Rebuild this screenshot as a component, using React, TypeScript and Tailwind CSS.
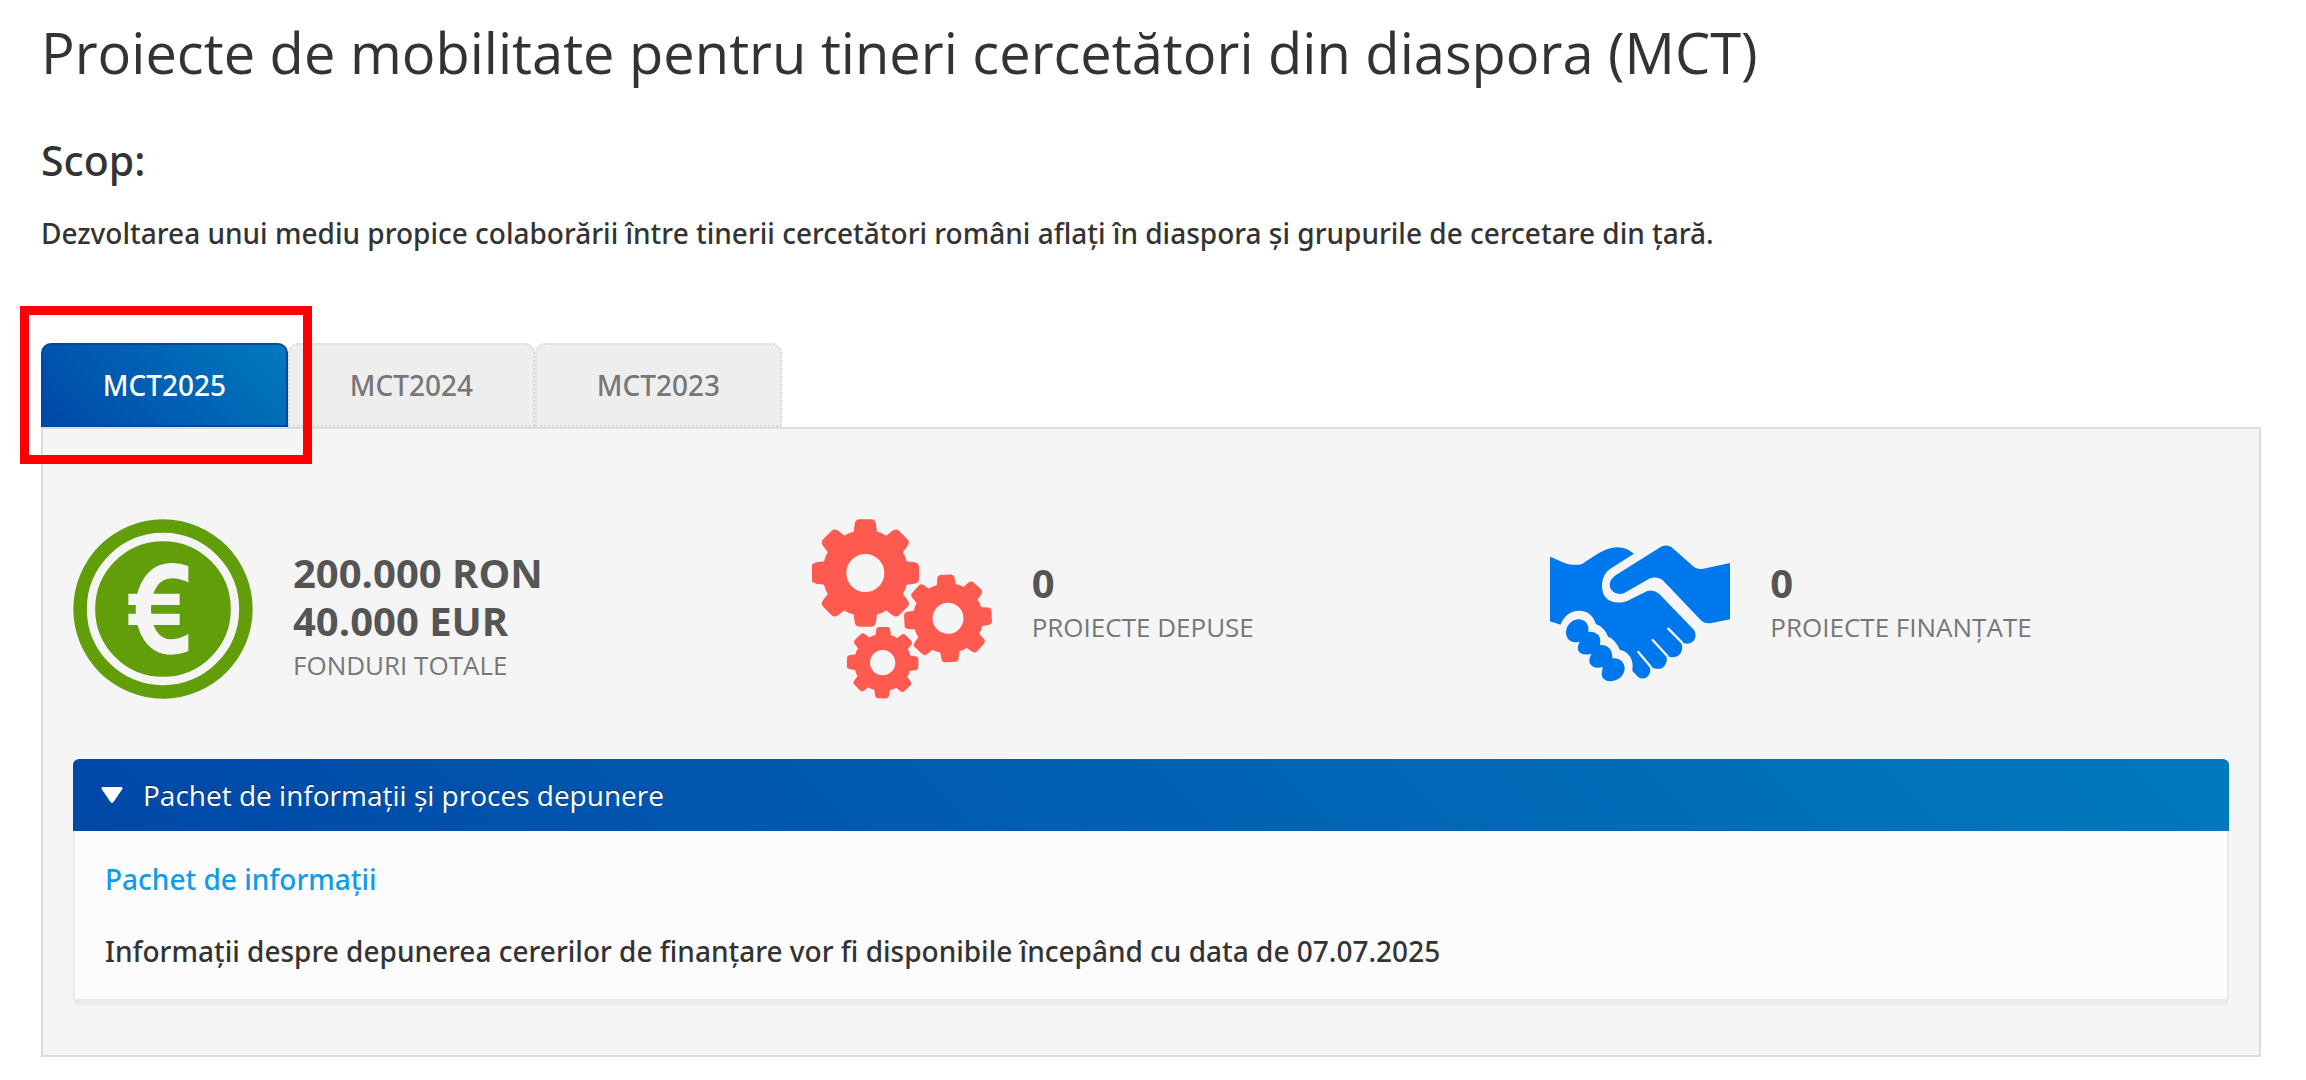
import { useState } from 'react';
import type { ReactNode } from 'react';

const tabs = ['MCT2025', 'MCT2024', 'MCT2023'];

const EuroIcon = () => (
    <svg viewBox="38 57 540 540" className="size-[180px] shrink-0" aria-hidden="true">
        <clipPath id="euro-arc">
            <rect x="200" y="180" width="184" height="300" />
        </clipPath>
        <circle cx="308" cy="327" r="269" fill="#629e0a" />
        <g fill="none" stroke="#f5f5f5">
            <circle cx="308" cy="327" r="216" strokeWidth="25" />
            <path
                clipPath="url(#euro-arc)"
                strokeWidth="46"
                d="M400 230 C376 217 358 212 336 212 C280 212 249 262 249 327 C249 392 280 441 332 441 C352 441 372 436 400 420"
            />
            <path strokeWidth="34" d="M204 298 H358 M204 358 H358" />
        </g>
    </svg>
);

const teeth = [0, 45, 90, 135, 180, 225, 270, 315];

const Gear = ({ transform }: { transform: string }) => (
    <g transform={transform}>
        <circle r="93" fill="none" stroke="#ff5a50" strokeWidth="72" />
        {teeth.map((angle) => (
            <path
                key={angle}
                transform={`rotate(${angle})`}
                d="M-36 -115 L-32 -147 Q-30 -161 -18 -161 L18 -161 Q30 -161 32 -147 L36 -115 Z"
                fill="#ff5a50"
            />
        ))}
    </g>
);

const GearsIcon = () => (
    <svg viewBox="36 42 540 540" className="size-[180px] shrink-0" aria-hidden="true">
        <Gear transform="translate(196 204)" />
        <Gear transform="translate(444 340) rotate(-3) scale(0.815)" />
        <Gear transform="translate(248 473) rotate(1) scale(0.665)" />
    </svg>
);

const HandshakeIcon = () => (
    <svg viewBox="60 -18 540 540" className="size-[180px] shrink-0" aria-hidden="true">
        <g fill="#0078ed">
            <path d="M60 95 C85 104 105 117 125 119 Q145 121 158 116 C175 104 205 82 235 71 C262 62 290 66 312 86 L240 132 C213 150 211 190 223 212 C238 235 268 236 290 229 L352 198 Q370 193 388 207 L490 313 C500 325 499 343 486 352 C474 359 463 356 453 350 C460 368 456 383 446 391 C434 400 420 398 409 390 C413 405 409 420 398 428 C386 435 370 431 358 422 C364 437 360 450 348 458 C334 464 324 458 316 447 L307 438 L308 420 C306 395 290 378 270 375 C262 355 248 340 234 335 C228 318 215 303 198 298 C190 270 170 257 148 257 C120 257 100 275 92 299 L60 289 Z" />
            <path d="M600 114 L520 131 Q505 135 493 127 L425 67 Q410 57 392 66 L258 150 C238 163 236 180 243 193 C252 207 268 210 283 204 L360 160 Q378 153 397 164 L512 285 Q525 297 545 294 L600 283 Z" />
            <path d="M108 325 C108 300 125 283 148 283 C168 285 178 300 175 321 C195 318 210 330 211 345 L210 360 C232 358 248 372 247 400 C268 397 285 412 284 432 C282 455 262 468 240 469 C217 468 210 452 219 427 C200 430 184 427 179 413 C176 404 180 395 184 386 C165 392 150 388 144 375 C142 365 146 358 149 350 C125 357 110 345 108 325 Z" />
        </g>
        <path
            d="M415 311 L456 353 M368 345 L412 393 M325 381 L362 425"
            stroke="#f5f5f5"
            strokeWidth="7"
            strokeLinecap="round"
        />
    </svg>
);

type StatProps = { icon: ReactNode; values: string[]; label: string };

const Stat = ({ icon, values, label }: StatProps) => (
    <div className="flex gap-10 px-[30px]">
        {icon}
        <div className={values.length > 1 ? 'pt-[30px]' : 'pt-10'}>
            {values.map((value) => (
                <p key={value} className="text-[40px] leading-[48px] font-bold text-[#555]">
                    {value}
                </p>
            ))}
            <p className="text-[26px] leading-[40px] text-[#777]">{label}</p>
        </div>
    </div>
);

const App = () => {
    const [activeTab, setActiveTab] = useState(tabs[0]);
    const [open, setOpen] = useState(true);

    return (
        <main className="bg-white pt-3 pr-[45px] pb-[23px] pl-[41px] font-['Open_Sans',sans-serif] text-[#333]">
            <h1 className="text-[56px] leading-[80px]">
                Proiecte de mobilitate pentru tineri cercetători din diaspora (MCT)
            </h1>
            <h2 className="mt-10 font-['Noto_Sans',sans-serif] text-[41px] leading-[56px] font-medium">Scop:</h2>
            <p className="mt-6 font-['Noto_Sans',sans-serif] text-[28px] leading-[42px] font-medium">
                Dezvoltarea unui mediu propice colaborării între tinerii cercetători români aflați în diaspora și
                grupurile de cercetare din țară.
            </p>

            <div className="mt-[89px] flex font-['Noto_Sans',sans-serif]" role="tablist">
                {tabs.map((tab) => (
                    <div key={tab} className="relative">
                        <button
                            role="tab"
                            aria-selected={tab === activeTab}
                            onClick={() => setActiveTab(tab)}
                            className={
                                tab === activeTab
                                    ? 'h-[84px] w-[247px] rounded-t-[10px] border-2 border-[#0046a5] bg-linear-45 from-[#0047a8] to-[#007abe] text-[28px] font-medium text-white'
                                    : 'h-[84px] w-[247px] rounded-t-[10px] border-2 border-dotted border-[#dadada] bg-[#eee] text-[28px] font-medium text-[#777]'
                            }
                        >
                            {tab}
                        </button>
                        {/* highlight around the newest call */}
                        {tab === tabs[0] && (
                            <span className="pointer-events-none absolute -top-[37px] -right-6 -bottom-[37px] -left-[21px] z-10 border-[9px] border-[#ff0000]" />
                        )}
                    </div>
                ))}
            </div>

            <section className="border-2 border-[#dcdcdc] bg-[#f5f5f5] pt-[90px] pb-[50px]">
                <div className="grid grid-cols-3">
                    <Stat icon={<EuroIcon />} values={['200.000 RON', '40.000 EUR']} label="FONDURI TOTALE" />
                    <Stat icon={<GearsIcon />} values={['0']} label="PROIECTE DEPUSE" />
                    <Stat icon={<HandshakeIcon />} values={['0']} label="PROIECTE FINANȚATE" />
                </div>

                <div className="mx-[30px] mt-[60px]">
                    <button
                        aria-expanded={open}
                        onClick={() => setOpen(!open)}
                        className="flex h-[72px] w-full items-center gap-5 rounded-t-md bg-linear-45 from-[#0047a8] to-[#007abe] pl-7 text-left text-[28px] text-white [text-shadow:0_-1px_1px_rgba(0,0,0,0.35)]"
                    >
                        <svg viewBox="0 0 22 16" className="h-4 w-[22px]" fill="#fff" aria-hidden="true">
                            <path d="M2 0 H20 Q22.500 0 21 2.500 L12.500 15 Q11 17 9.500 15 L1 2.500 Q-0.500 0 2 0 Z" />
                        </svg>
                        Pachet de informații și proces depunere
                    </button>
                    {open && (
                        <div className="rounded-b-md border-x-2 border-b-[6px] border-[#eaeaea] bg-[#fcfcfc] px-[30px] py-[27px] font-['Noto_Sans',sans-serif] text-[28px] leading-[42px] font-medium">
                            <a href="#pachet" className="text-[#119be8]">
                                Pachet de informații
                            </a>
                            <p className="mt-[30px]">
                                Informații despre depunerea cererilor de finanțare vor fi disponibile începând cu data
                                de 07.07.2025
                            </p>
                        </div>
                    )}
                </div>
            </section>
        </main>
    );
};

export default App;
